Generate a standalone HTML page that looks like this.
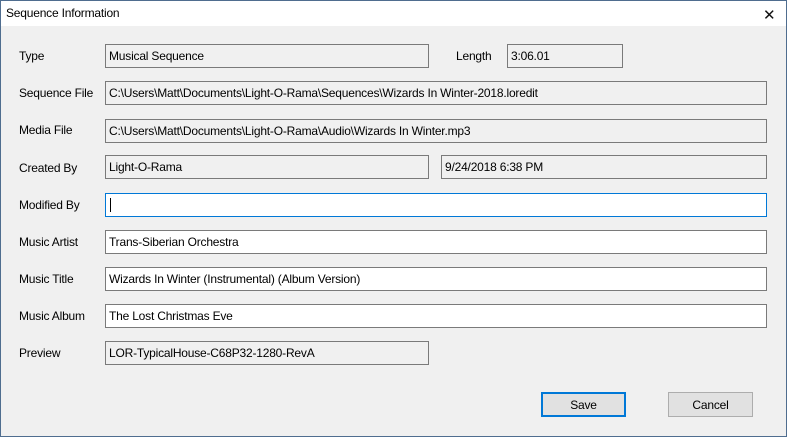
<!DOCTYPE html><html><head><style>
*{margin:0;padding:0;box-sizing:border-box}
body{width:787px;height:437px;overflow:hidden;background:#f0f0f0;font-family:"Liberation Sans",sans-serif;font-size:12px;letter-spacing:-0.2px;color:#000;position:relative}
.win{position:absolute;left:0;top:0;width:787px;height:437px;border:1px solid #4f6d8f;border-top:none}
.title{position:absolute;left:0;top:0;width:787px;height:26px;background:#fff;border-top:1px solid #4f6d8f}
.title span{position:absolute;left:6px;top:5px}
.x{position:absolute;left:763px;top:5px;font-size:15px;font-weight:300;color:#111}
.l{position:absolute;left:19px}
.f{position:absolute;border:1px solid #7a7a7a;height:24px;padding:4px 0 0 3px;white-space:nowrap;overflow:hidden}
.w{background:#fff}
.btn{position:absolute;top:392px;width:85px;height:25px;background:#e1e1e1;border:1px solid #adadad;text-align:center;padding-top:5px}
</style></head><body>
<div class="title"><span>Sequence Information</span><div class="x">✕</div></div>
<div class="win"></div>
<div class="l" style="top:49px">Type</div>
<div class="f" style="left:105px;top:44px;width:324px">Musical Sequence</div>
<div style="position:absolute;left:456px;top:49px">Length</div>
<div class="f" style="left:507px;top:44px;width:116px">3:06.01</div>
<div class="l" style="top:86px">Sequence File</div>
<div class="f" style="left:105px;top:81px;width:662px">C:\Users\Matt\Documents\Light-O-Rama\Sequences\Wizards In Winter-2018.loredit</div>
<div class="l" style="top:123px">Media File</div>
<div class="f" style="left:105px;top:119px;width:662px">C:\Users\Matt\Documents\Light-O-Rama\Audio\Wizards In Winter.mp3</div>
<div class="l" style="top:161px">Created By</div>
<div class="f" style="left:105px;top:155px;width:324px">Light-O-Rama</div>
<div class="f" style="left:441px;top:155px;width:326px">9/24/2018 6:38 PM</div>
<div class="l" style="top:198px">Modified By</div>
<div class="f w" style="left:105px;top:193px;width:662px;border-color:#0078d7"><span style="display:inline-block;width:1px;height:14px;background:#000;margin-left:1px"></span></div>
<div class="l" style="top:235px">Music Artist</div>
<div class="f w" style="left:105px;top:230px;width:662px">Trans-Siberian Orchestra</div>
<div class="l" style="top:272px">Music Title</div>
<div class="f w" style="left:105px;top:267px;width:662px">Wizards In Winter (Instrumental) (Album Version)</div>
<div class="l" style="top:309px">Music Album</div>
<div class="f w" style="left:105px;top:304px;width:662px">The Lost Christmas Eve</div>
<div class="l" style="top:346px">Preview</div>
<div class="f" style="left:105px;top:341px;width:324px">LOR-TypicalHouse-C68P32-1280-RevA</div>
<div class="btn" style="left:541px;border:2px solid #0078d7;padding-top:4px">Save</div>
<div class="btn" style="left:668px">Cancel</div>
</body></html>
